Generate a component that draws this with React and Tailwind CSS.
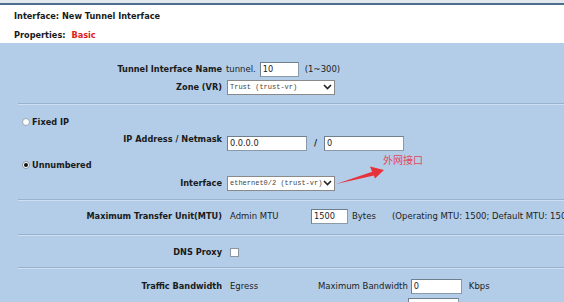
export default function App() {
  const font = { fontFamily: '"DejaVu Sans", Verdana, sans-serif' }

  function Sep() {
    return <div className="ml-[18px] h-[2px] border-t border-[#98b2ce] bg-[#cddff1]" />
  }

  function Label({ children }) {
    return <div className="w-[222px] shrink-0 text-right font-bold text-[8.2px] text-[#1a1a1a]">{children}</div>
  }

  function TextBox({ value, w }) {
    return (
      <div className={`h-[15px] ${w} bg-white border border-[#8b9aa8] border-t-[#6f7f8e] border-l-[#6f7f8e] px-[2px] leading-[13px] text-[8.2px] text-[#222]`}>
        {value}
      </div>
    )
  }

  function Select({ value }) {
    return (
      <div className="ml-[5px] h-[15px] w-[108px] bg-white border border-[#8a8a8a] flex items-center justify-between pl-[2px] pr-[2px] overflow-hidden">
        <span className="text-[7px] text-[#444] whitespace-nowrap" style={{ fontFamily: '"Liberation Mono", monospace' }}>{value}</span>
        <svg width="9" height="6" viewBox="0 0 9 6" className="shrink-0">
          <path d="M1 1 L4.5 4.5 L8 1" stroke="#222" strokeWidth="1.6" fill="none" />
        </svg>
      </div>
    )
  }

  return (
    <div className="relative w-[564px] h-[302px] overflow-hidden bg-[#b3cde8] text-[8.5px] text-[#222]" style={font}>
      <div className="h-[3px] bg-[#e3e8ee]" />
      <div className="h-[2px] bg-[#4f6e8e]" />
      <div className="h-[38px] bg-white pl-[14px] pt-[6px] font-bold text-[8.2px] text-[#1a1a1a]">
        <div className="h-[19px] leading-[10px]">Interface: New Tunnel Interface</div>
        <div className="leading-[10px]">
          Properties: <span className="ml-[3px] text-[#e01b1b]">Basic</span>
        </div>
      </div>

      <div className="pt-[17px] pb-[7px]">
        <div className="h-[18px] flex items-center">
          <Label>Tunnel Interface Name</Label>
          <span className="ml-[4px]">tunnel.</span>
          <div className="ml-[4px]"><TextBox value="10" w="w-[39px]" /></div>
          <span className="ml-[6px]">(1~300)</span>
        </div>
        <div className="h-[18px] flex items-center">
          <Label>Zone (VR)</Label>
          <Select value="Trust (trust-vr)" />
        </div>
      </div>
      <Sep />

      <div className="pt-[8px] pb-[7px]">
        <div className="h-[18px] flex items-center pl-[22px] font-bold text-[8.2px] text-[#1a1a1a]">
          <span className="w-[8px] h-[8px] rounded-full bg-white border border-[#9aa6b2]" />
          <span className="ml-[2px]">Fixed IP</span>
        </div>
        <div className="h-[22px] flex items-start">
          <div className="pt-[2px]"><Label>IP Address / Netmask</Label></div>
          <div className="ml-[5px] mt-[5px] flex items-center">
            <TextBox value="0.0.0.0" w="w-[80px]" />
            <span className="ml-[7px] mr-[7px] font-bold">/</span>
            <TextBox value="0" w="w-[80px]" />
          </div>
        </div>
        <div className="h-[3px]" />
        <div className="h-[18px] flex items-center pl-[22px] font-bold text-[8.2px] text-[#1a1a1a]">
          <span className="w-[8px] h-[8px] rounded-full bg-white border border-[#8a96a2] flex items-center justify-center">
            <span className="w-[4px] h-[4px] rounded-full bg-[#111]" />
          </span>
          <span className="ml-[2px]">Unnumbered</span>
        </div>
        <div className="h-[18px] flex items-center">
          <Label>Interface</Label>
          <Select value="ethernet0/2 (trust-vr)" />
        </div>
      </div>
      <Sep />

      <div className="pt-[6px] pb-[9px]">
        <div className="h-[18px] flex items-center whitespace-nowrap">
          <Label>Maximum Transfer Unit(MTU)</Label>
          <span className="ml-[8px] w-[81px] shrink-0">Admin MTU</span>
          <TextBox value="1500" w="w-[37px] shrink-0" />
          <span className="ml-[4px] w-[40px] shrink-0">Bytes</span>
          <span>(Operating MTU: 1500; Default MTU: 150</span>
        </div>
      </div>
      <Sep />

      <div className="pt-[7px] pb-[6px]">
        <div className="h-[18px] flex items-center">
          <Label>DNS Proxy</Label>
          <span className="ml-[8px] w-[9px] h-[9px] bg-white border border-[#8a96a2]" />
        </div>
      </div>
      <Sep />

      <div className="pt-[8px]">
        <div className="h-[18px] flex items-center whitespace-nowrap">
          <Label>Traffic Bandwidth</Label>
          <span className="ml-[8px] w-[88px] shrink-0">Egress</span>
          <span>Maximum Bandwidth</span>
          <div className="ml-[3px]"><TextBox value="0" w="w-[51px]" /></div>
          <span className="ml-[7px]">Kbps</span>
        </div>
        <div className="h-[18px] flex items-end">
          <div className="ml-[408px]"><TextBox value="" w="w-[51px]" /></div>
        </div>
      </div>

      <div
        className="absolute left-[383px] top-[152px] text-[10px] text-[#e4485a]"
        style={{ fontFamily: '"Noto Sans CJK SC", sans-serif' }}
      >
        外网接口
      </div>
      <svg className="absolute left-0 top-0 pointer-events-none" width="564" height="302" viewBox="0 0 564 302">
        <path d="M336 184 L373 171.5 L374 175.5 Z" fill="#e8323a" />
        <path d="M384 170 L370 166.5 L375 178.5 Z" fill="#e8323a" />
      </svg>
    </div>
  )
}
